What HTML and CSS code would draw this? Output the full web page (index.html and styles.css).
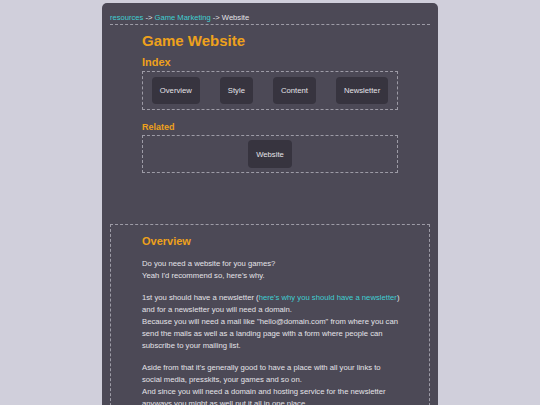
FILE: index.html
```html
<!DOCTYPE html>
<html>
<head>
<meta charset="utf-8">
<link rel="stylesheet" href="styles.css">
</head>
<body>
<div class="page">
  <nav class="crumbs"><a href="#">resources</a> -&gt; <a href="#">Game Marketing</a> -&gt; Website</nav>
  <section class="intro">
    <h1 class="title">Game Website</h1>
    <h2 class="sub">Index</h2>
    <div class="box index">
      <a class="btn" href="#">Overview</a>
      <a class="btn" href="#">Style</a>
      <a class="btn" href="#">Content</a>
      <a class="btn" href="#">Newsletter</a>
    </div>
    <h3 class="sub small">Related</h3>
    <div class="box related">
      <a class="btn" href="#">Website</a>
    </div>
  </section>
  <section class="article">
    <div class="article-inner">
      <h2 class="head">Overview</h2>
      <p>Do you need a website for you games?<br>Yeah I'd recommend so, here's why.</p>
      <p><span class="nowrap">1st you should have a newsletter (<a href="#">here's why you should have a newsletter</a>)</span><br>and for a newsletter you will need a domain.<br>Because you will need a mail like "hello@domain.com" from where you can send the mails as well as a landing page with a form where people can subscribe to your mailing list.</p>
      <p>Aside from that it's generally good to have a place with all your links to social media, presskits, your games and so on.<br>And since you will need a domain and hosting service for the newsletter anyways you might as well put it all in one place.</p>
    </div>
  </section>
</div>
</body>
</html>
```
FILE: styles.css
```css
html, body {
  margin: 0;
  padding: 0;
  background: #d0cfdb;
  font-family: "Liberation Sans", Arial, sans-serif;
  color: #e4e3e8;
}
.page {
  width: 320px;
  margin: 3px auto 0;
  padding: 8px 8px 40px;
  background: #4c4956;
  border-radius: 5px;
  min-height: 600px;
}
a { color: #3fcfd2; text-decoration: none; }
.crumbs {
  font-size: 7.6px;
  line-height: 11px;
  padding-top: 1px;
  padding-bottom: 1px;
  border-bottom: 1px dashed #9d9ba6;
}
.intro {
  width: 256px;
  margin: 0 auto;
}
.title {
  margin: 6px 0 0;
  font-size: 15px;
  line-height: 20px;
  color: #eea11c;
}
.sub {
  margin: 4px 0 2px;
  font-size: 11px;
  line-height: 14px;
  color: #eea11c;
}
.sub.small {
  font-size: 9px;
  line-height: 12px;
  margin-top: 11px;
}
.box {
  border: 1px dashed #9d9ba6;
  display: flex;
  justify-content: center;
  gap: 20px;
}
.index { padding: 5px 0; }
.related { padding: 4px 0; }
.btn {
  display: block;
  background: #37343f;
  color: #e4e3e8;
  border-radius: 4px;
  font-size: 7.7px;
  line-height: 11px;
  padding: 8px 8px;
}
.related .btn { padding: 8.5px 8px; }
.article {
  margin-top: 51px;
  border: 1px dashed #9d9ba6;
}
.article-inner {
  width: 256px;
  margin: 0 auto;
  padding-top: 8px;
}
.head {
  margin: 0 0 9px;
  font-size: 11px;
  line-height: 16px;
  color: #eea11c;
}
.article p {
  margin: 0 0 10px;
  font-size: 7.7px;
  line-height: 12px;
}
.nowrap { white-space: nowrap; }
```
